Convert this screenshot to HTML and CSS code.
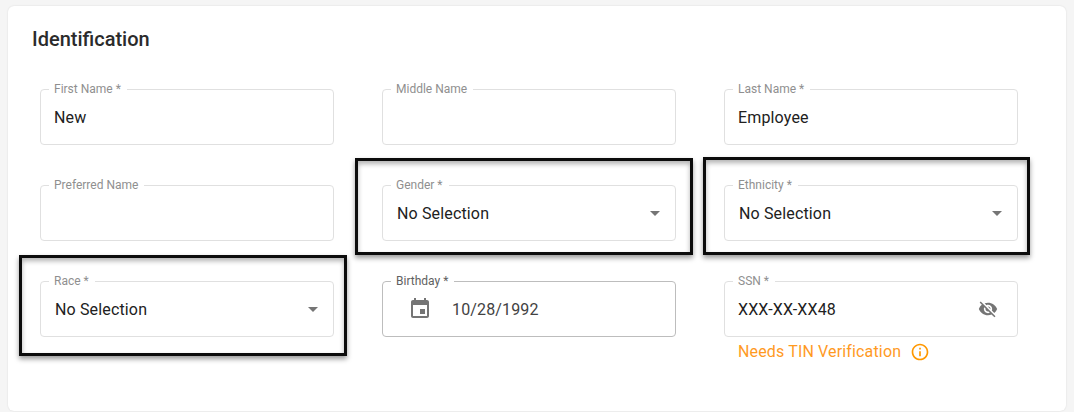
FILE: index.html
```html
<!DOCTYPE html>
<html lang="en">
<head>
<meta charset="utf-8">
<title>Identification</title>
<link rel="stylesheet" href="styles.css">
</head>
<body>
<main class="card">
  <h2 class="title">Identification</h2>
  <div class="grid">
    <div class="cell"><div class="field"><span class="label">First Name *</span><span class="value">New</span></div></div>
    <div class="cell"><div class="field"><span class="label">Middle Name</span></div></div>
    <div class="cell"><div class="field"><span class="label">Last Name *</span><span class="value">Employee</span></div></div>

    <div class="cell"><div class="field"><span class="label">Preferred Name</span></div></div>
    <div class="cell"><div class="field select"><span class="label">Gender *</span><span class="value">No Selection</span><span class="caret"></span><span class="mark mark-gender"></span></div></div>
    <div class="cell"><div class="field select"><span class="label">Ethnicity *</span><span class="value">No Selection</span><span class="caret"></span><span class="mark mark-ethnicity"></span></div></div>

    <div class="cell"><div class="field select"><span class="label">Race *</span><span class="value">No Selection</span><span class="caret"></span><span class="mark mark-race"></span></div></div>
    <div class="cell"><div class="field date"><span class="label dark">Birthday *</span>
      <svg class="icon cal" viewBox="0 0 24 24" width="24" height="24"><path d="M17 12h-5v5h5v-5zM16 1v2H8V1H6v2H5c-1.11 0-1.99.9-1.99 2L3 19c0 1.1.89 2 2 2h14c1.1 0 2-.9 2-2V5c0-1.1-.9-2-2-2h-1V1h-2zm3 18H5V8h14v11z"/></svg>
      <span class="value">10/28/1992</span></div></div>
    <div class="cell"><div class="field secret"><span class="label">SSN *</span><span class="value">XXX-XX-XX48</span>
      <svg class="icon eye" viewBox="0 0 24 24" width="20" height="20"><path d="M12 7c2.76 0 5 2.24 5 5 0 .65-.13 1.26-.36 1.83l2.92 2.92c1.51-1.26 2.7-2.89 3.43-4.75-1.73-4.39-6-7.5-11-7.5-1.4 0-2.74.25-3.98.7l2.16 2.16C10.74 7.13 11.35 7 12 7zM2 4.27l2.28 2.28.46.46C3.08 8.3 1.78 10.02 1 12c1.73 4.39 6 7.5 11 7.5 1.55 0 3.03-.3 4.38-.84l.42.42L19.73 22 21 20.73 3.27 3 2 4.27zM7.53 9.8l1.55 1.55c-.05.21-.08.43-.08.65 0 1.66 1.34 3 3 3 .22 0 .44-.03.65-.08l1.55 1.55c-.67.33-1.41.53-2.2.53-2.76 0-5-2.24-5-5 0-.79.2-1.53.53-2.2zm4.31-.78l3.15 3.15.02-.16c0-1.66-1.34-3-3-3l-.17.01z"/></svg></div>
      <p class="hint">Needs TIN Verification
        <svg class="info" viewBox="0 0 24 24" width="20" height="20"><path d="M11 7h2v2h-2zm0 4h2v6h-2zm1-9C6.48 2 2 6.48 2 12s4.48 10 10 10 10-4.48 10-10S17.52 2 12 2zm0 18c-4.41 0-8-3.59-8-8s3.59-8 8-8 8 3.59 8 8-3.59 8-8 8z"/></svg></p></div>
  </div>
</main>
</body>
</html>
```
FILE: styles.css
```css
* { box-sizing: border-box; }
html, body { margin: 0; height: 412px; overflow: hidden; }
body {
  background: #f5f5f5;
  padding: 6px 8px 0;
  font-family: Roboto, "Liberation Sans", sans-serif;
}
.card {
  height: 405px;
  background: #fff;
  border-radius: 6px;
  box-shadow: 0 0 2px rgba(0, 0, 0, .12);
  padding: 20px 48px 0 24px;
}
.title {
  margin: 0;
  font-size: 20px;
  line-height: 26px;
  font-weight: 500;
  color: #2b2b2b;
}
.grid {
  margin: 37px 0 0 8px;
  display: grid;
  grid-template-columns: repeat(3, 294px);
  column-gap: 48px;
  row-gap: 40px;
}
.cell { position: relative; height: 56px; }
.field {
  position: relative;
  height: 56px;
  border: 1px solid #e0e0e0;
  border-radius: 4px;
  display: flex;
  align-items: center;
  padding: 1px 13px 0;
}
.label {
  position: absolute;
  top: -8px;
  left: 8px;
  padding: 0 6px 0 5px;
  background: #fff;
  font-size: 12px;
  line-height: 14px;
  color: #8f8f8f;
  white-space: nowrap;
}
.label.dark { color: #616161; }
.value {
  font-size: 16px;
  line-height: 24px;
  color: #212121;
  letter-spacing: .15px;
}
.select .value { margin-left: 1px; }
.caret {
  margin-left: auto;
  margin-right: 2px;
  margin-top: -1px;
  width: 0;
  height: 0;
  border-left: 5px solid transparent;
  border-right: 5px solid transparent;
  border-top: 5px solid #757575;
}
.date { border-color: #bdbdbd; padding-left: 25px; gap: 20px; }
.date .value { color: #424242; }
.icon { fill: #757575; flex: none; }
.date .icon { margin-top: -1px; }
.secret { justify-content: space-between; padding-right: 20px; }
.secret .icon { margin-top: -1px; margin-right: -1px; }
.hint {
  margin: 5px 0 0 14px;
  display: flex;
  align-items: center;
  gap: 9px;
  font-size: 16px;
  line-height: 20px;
  color: #ff9a1f;
  letter-spacing: .15px;
}
.info { fill: #ff9800; }
.mark {
  position: absolute;
  border: 3px solid #0c0c0c;
  box-shadow: 0 3px 5px rgba(0, 0, 0, .4), inset 0 3px 5px rgba(0, 0, 0, .3);
  pointer-events: none;
}
.mark-gender { left: -28px; top: -28px; width: 338px; height: 97px; }
.mark-ethnicity { left: -22px; top: -29px; width: 327px; height: 98px; }
.mark-race { left: -22px; top: -27px; width: 328px; height: 101px; }
```
